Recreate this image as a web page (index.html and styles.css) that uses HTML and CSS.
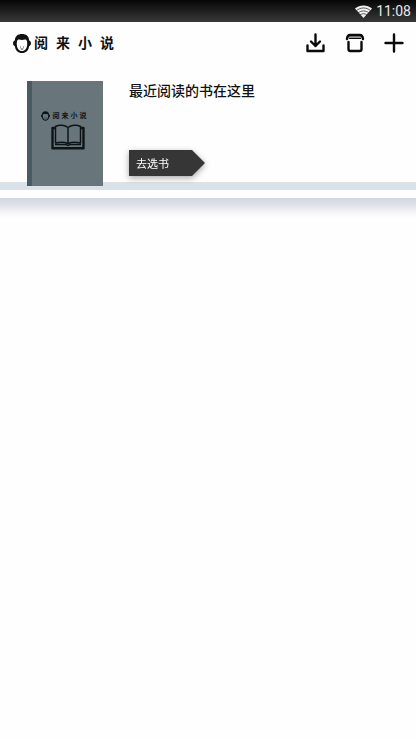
FILE: index.html
```html
<!DOCTYPE html>
<html lang="zh-CN">
<head>
<meta charset="utf-8">
<meta name="viewport" content="width=device-width, initial-scale=1">
<title>阅来小说</title>
<link rel="stylesheet" href="styles.css">
</head>
<body>
<svg class="defs" width="0" height="0" aria-hidden="true">
  <symbol id="face" viewBox="0 0 18 19">
    <path fill="currentColor" d="M9 0C4.800 0 2.200 2 1.800 6.500.6 7 0 8 0 9.300s.7 2.500 1.900 2.900C2.400 16.500 5 19 9 19s6.600-2.500 7.100-6.800C17.300 11.800 18 10.600 18 9.300s-.6-2.300-1.800-2.800C15.800 2 13.200 0 9 0z"/>
    <path fill="var(--face-fill)" d="M3.800 10.500c-.2-2.500.3-4.500 1.600-4.900C6.600 5.300 7.800 6 9 6s2.400-.7 3.600-.4c1.300.4 1.800 2.400 1.600 4.900C14 14.500 12 17 9 17s-5-2.500-5.200-6.500z"/>
    <path fill="none" stroke="currentColor" stroke-width=".8" stroke-linecap="round" d="M7.500 13v.1M10.500 13v.1M8 15q1 .7 2 0"/>
  </symbol>
</svg>

<div class="status">
  <svg width="17" height="13" viewBox="0 0 17 13" aria-label="Wi-Fi" role="img">
    <path fill="#f2f2f2" d="M0 3.600C4.800-.6 12.200-.6 17 3.600L8.500 13z"/>
    <path fill="none" stroke="#333" stroke-width=".8" d="M1.500 5.600c4-3.500 10-3.500 14 0M3.200 7.900c3-2.600 7.600-2.600 10.600 0M5 10c2-1.700 5-1.700 7 0"/>
  </svg>
  <time>11:08</time>
</div>

<header class="topbar">
  <h1 class="brand">
    <svg class="brand-face" aria-hidden="true"><use href="#face"/></svg>
    <span class="wordmark"><span>阅</span><span>来</span><span>小</span><span>说</span></span>
  </h1>
  <nav class="actions">
    <button type="button" aria-label="下载">
      <svg width="20" height="20" viewBox="0 0 20 20"><path d="M9.500 1.500v11.500M5 8.500l4.500 4.500L14 8.500M1.500 12.500v5.500h16v-5.500"/></svg>
    </button>
    <button type="button" aria-label="书店">
      <svg width="20" height="20" viewBox="0 0 20 20"><path class="lid" d="M4 2h12v4H4z"/><path d="M2 6Q2.500 2 5 2h10q2.500 0 3 4"/><path class="thin" d="M4.500 5.500h11"/><path d="M3.500 9v7q0 2 2 2h9q2 0 2-2V9"/></svg>
    </button>
    <button type="button" aria-label="添加">
      <svg width="20" height="20" viewBox="0 0 20 20"><path d="M10 1.500v17M1.500 10h17"/></svg>
    </button>
  </nav>
</header>

<main>
  <section class="recent">
    <div class="book">
      <div class="book-brand">
        <svg class="book-face" aria-hidden="true"><use href="#face"/></svg>
        <span class="book-name"><span>阅</span><span>来</span><span>小</span><span>说</span></span>
      </div>
      <svg width="34" height="26" viewBox="0 0 34 26" aria-hidden="true">
        <path fill="none" stroke="#0d1519" stroke-width="2.400" stroke-linejoin="round" d="M4.500 4H1.500v20.300h31V4h-3"/>
        <path fill="none" stroke="#0d1519" stroke-width="1.500" stroke-linejoin="round" d="M17 3.500C14 .8 8 .5 4.500 2.500v16.500c4-1 9-1 12.500.5 3.500-1.500 8.500-1.500 12.500-.5V2.500C26 .5 20 .8 17 3.500zv16"/>
        <path fill="none" stroke="#0d1519" stroke-width="1.500" d="M4 20.500h11l2 1 2-1h11"/>
      </svg>
    </div>
    <div class="info">
      <h2>最近阅读的书在这里</h2>
      <div class="tag-shadow"><button type="button" class="tag">去选书</button></div>
    </div>
  </section>
  <div class="shelf"></div>
  <div class="shelf-shadow"></div>
</main>
</body>
</html>
```

FILE: styles.css
```css
* {
  box-sizing: border-box;
}

body {
  margin: 0;
  background: #fefefe;
  color: #111;
  font-family: Roboto, "Noto Sans CJK SC", sans-serif;
  --face-fill: #fefefe;
}

h1,
h2 {
  margin: 0;
}

button {
  padding: 0;
  border: 0;
  background: none;
  color: inherit;
  font: inherit;
  cursor: pointer;
}

svg {
  display: block;
}

.defs {
  position: absolute;
}

.status {
  display: flex;
  align-items: center;
  justify-content: flex-end;
  gap: 4px;
  height: 22px;
  padding-right: 5px;
  background: linear-gradient(#060606, #393939);
  color: #e8e8e8;
  font-size: 14px;
  line-height: 22px;
}

.topbar {
  display: flex;
  align-items: center;
  justify-content: space-between;
  height: 42px;
  padding: 0 12px 0 13px;
}

.brand {
  display: flex;
  align-items: center;
  gap: 3px;
  font-size: 14px;
  line-height: 20px;
  font-weight: 700;
}

.brand-face {
  width: 18px;
  height: 19px;
}

.wordmark {
  display: flex;
  gap: 8px;
}

.actions {
  display: flex;
  gap: 19px;
}

.actions path {
  fill: none;
  stroke: #0a0a0a;
  stroke-width: 2.400;
  stroke-linecap: round;
  stroke-linejoin: round;
}

.actions .lid {
  fill: #999;
  stroke: none;
}

.actions .thin {
  stroke-width: 1;
}

.recent {
  display: flex;
  gap: 26px;
  padding: 17px 27px 0;
}

.book {
  --face-fill: #68767b;
  position: relative;
  z-index: 1;
  display: flex;
  flex-direction: column;
  align-items: center;
  width: 76px;
  height: 105px;
  padding-top: 29px;
  border-left: 5px solid #4a5a62;
  background: #68767b;
  color: #0d1519;
}

.book-brand {
  display: flex;
  align-items: center;
  gap: 3px;
  margin-bottom: 2px;
  padding-right: 8px;
}

.book-face {
  width: 9px;
  height: 10px;
}

.book-name {
  display: flex;
  gap: 2px;
  font-size: 7px;
  line-height: 12px;
  font-weight: 700;
}

.info {
  position: relative;
  z-index: 1;
  display: flex;
  flex-direction: column;
  justify-content: space-between;
  align-items: flex-start;
  padding-bottom: 10px;
}

.info h2 {
  font-size: 14px;
  line-height: 20px;
  font-weight: 500;
}

.tag-shadow {
  filter: drop-shadow(0 2px 3px rgba(0, 0, 0, 0.35));
}

.tag {
  display: block;
  width: 76px;
  height: 26px;
  padding: 3px 0 0 7px;
  background: #363636;
  clip-path: polygon(0 0, calc(100% - 13px) 0, 100% 50%, calc(100% - 13px) 100%, 0 100%);
  color: #fff;
  font-size: 11px;
  line-height: 22px;
  text-align: left;
}

.shelf {
  height: 8px;
  margin-top: -4px;
  background: #d9e2e8;
}

.shelf-shadow {
  height: 20px;
  margin-top: 8px;
  background: linear-gradient(#d0d6e1, #dfe2e8 35%, #f7f7f8 75%, #fefefe);
}
```
